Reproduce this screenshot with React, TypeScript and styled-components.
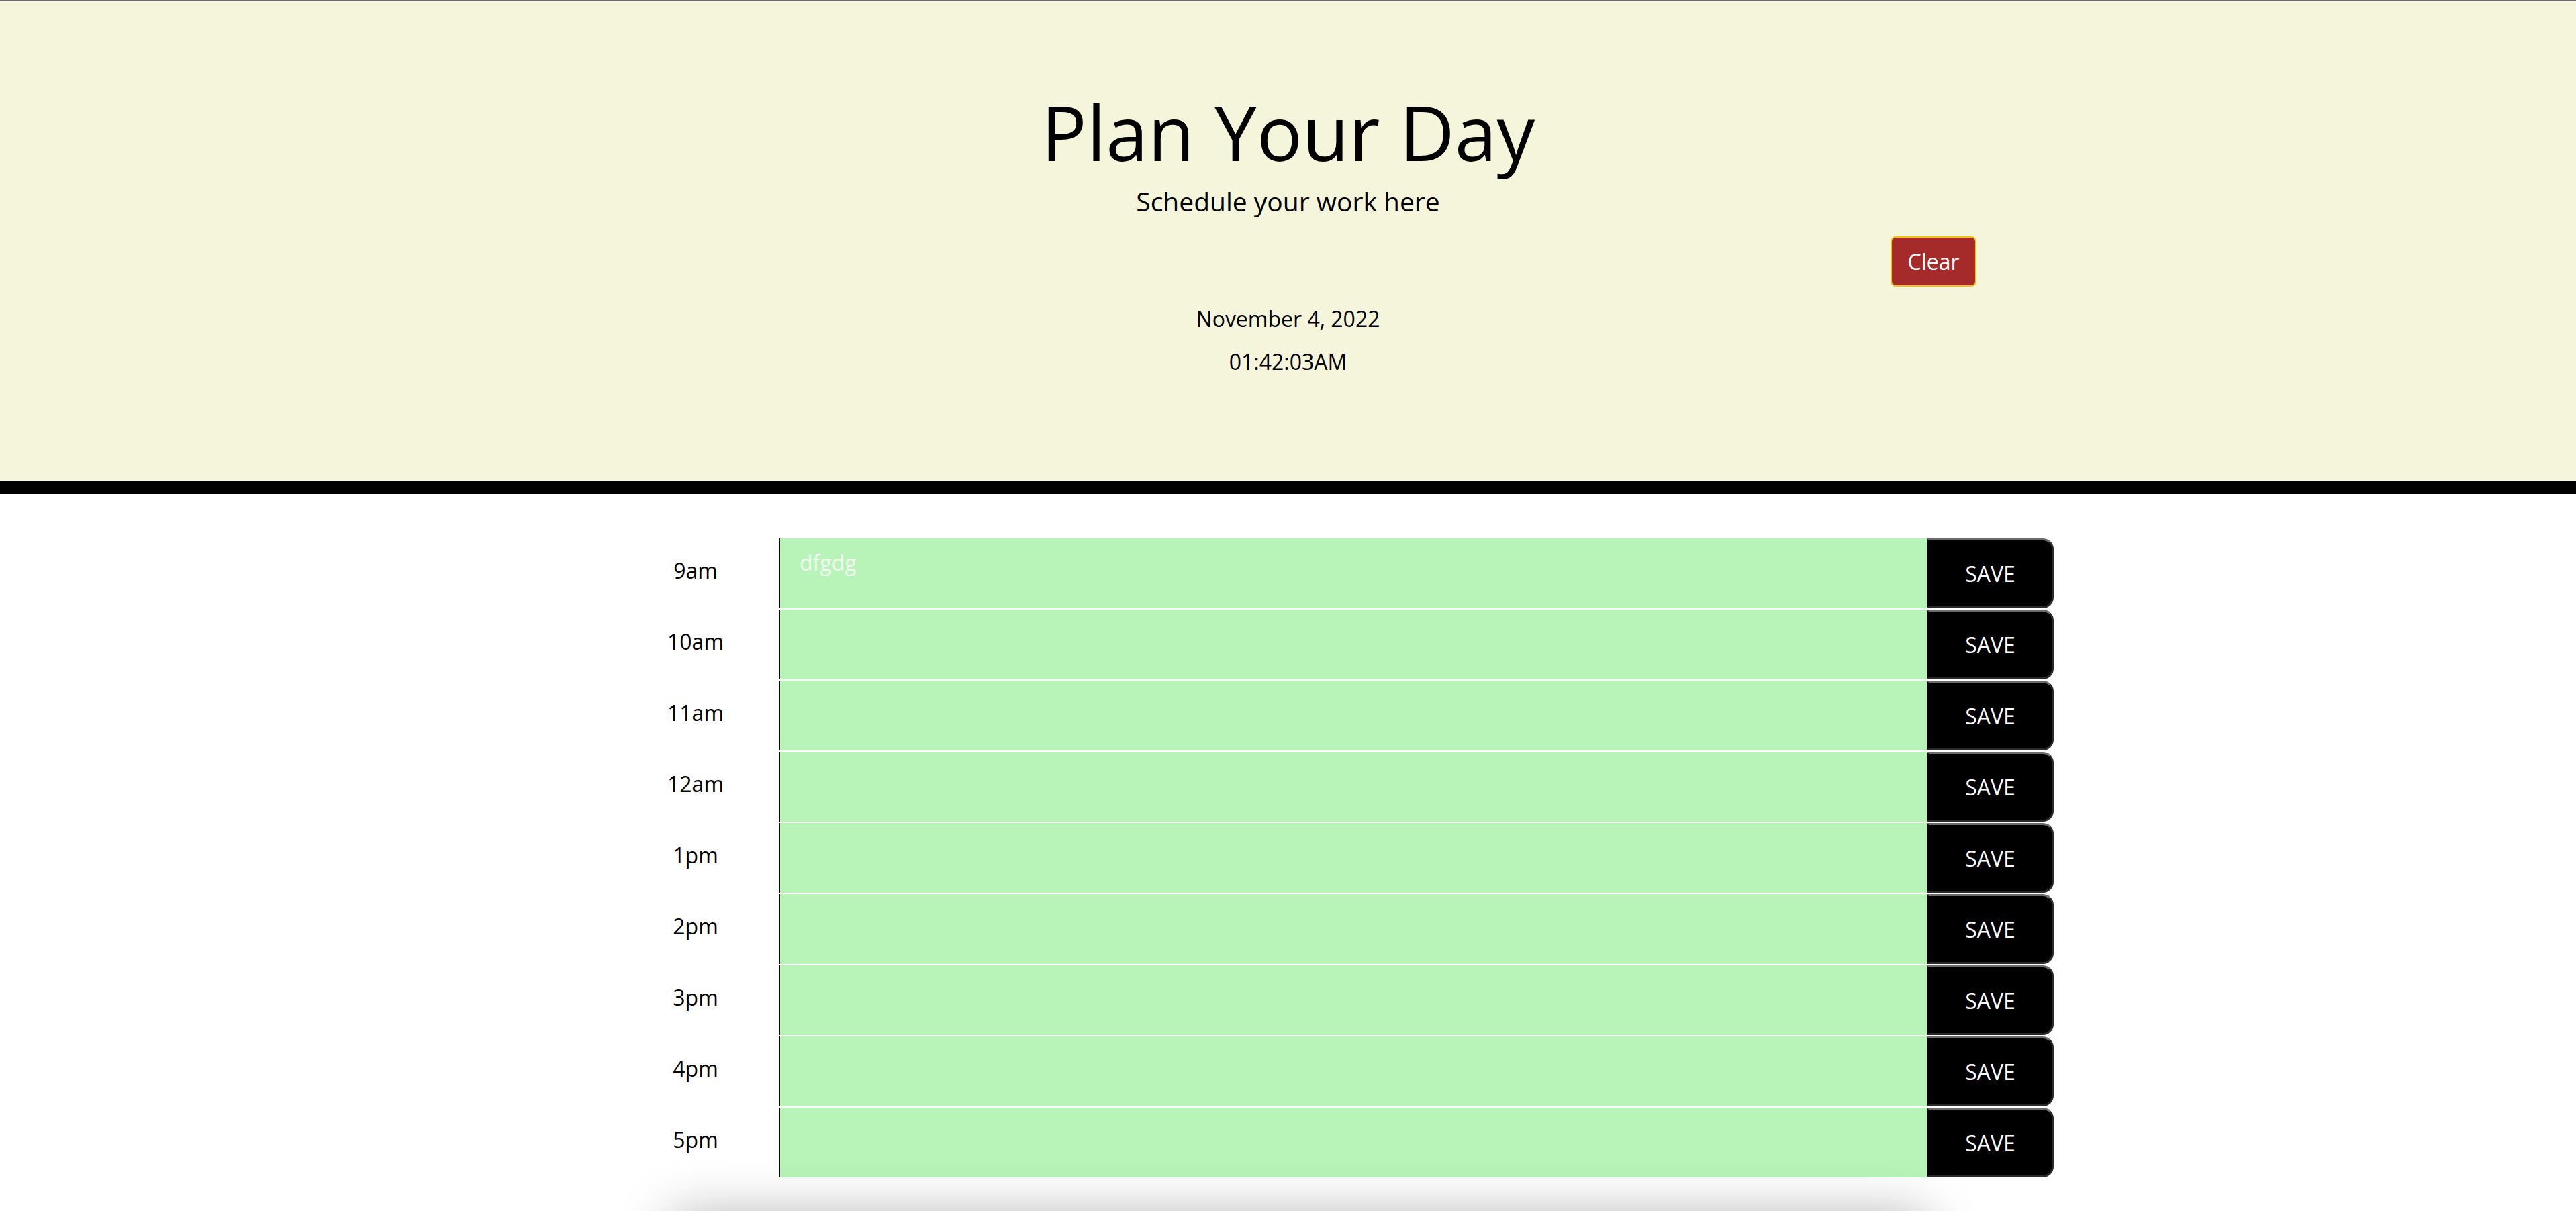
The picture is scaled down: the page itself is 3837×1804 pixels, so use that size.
import React from "react";
import styled, { createGlobalStyle } from "styled-components";

const GlobalStyle = createGlobalStyle`
  html, body {
    margin: 0;
    padding: 0;
    background: #ffffff;
    overflow: hidden;
    font-family: "Open Sans", "Noto Sans", sans-serif;
  }
  * { box-sizing: border-box; }
`;

const Page = styled.div`
  width: 3837px;
  height: 1804px;
  overflow: hidden;
  background: #ffffff;
`;

const Header = styled.header`
  display: flex;
  flex-direction: column;
  align-items: center;
  background: #f5f5dc;
  border-top: 2px solid #6a6a6a;
  border-bottom: 20px solid #000000;
  padding: 125px 0 153px;
  color: #000000;
`;

const Title = styled.h1`
  margin: 0;
  font-size: 113px;
  line-height: 139px;
  font-weight: 400;
`;

const Subtitle = styled.p`
  margin: 8px 0 0;
  font-size: 39px;
  line-height: 52px;
`;

const ClearRow = styled.div`
  align-self: stretch;
  display: flex;
  justify-content: flex-end;
  padding-right: 893px;
  margin-top: 26px;
`;

const ClearButton = styled.button`
  width: 128px;
  height: 75px;
  background: #a52a2a;
  color: #ffffff;
  border: 2px solid #f4c20d;
  border-radius: 8px;
  font-family: "Open Sans", sans-serif;
  font-size: 32px;
  line-height: 1;
  padding: 0;
`;

const DateLine = styled.p<{ $gap: number }>`
  margin: ${(p) => p.$gap}px 0 0;
  font-size: 32px;
  line-height: 48px;
`;

const Schedule = styled.main`
  display: flex;
  flex-direction: column;
  gap: 2px;
  width: 2133px;
  margin: 66px 0 0 926px;
`;

const Row = styled.div`
  display: grid;
  grid-template-columns: 234px 1fr 189px;
  height: 104px;
`;

const Hour = styled.div`
  padding: 24px 14px 0 0;
  text-align: center;
  font-size: 32px;
  line-height: 48px;
  color: #000000;
`;

const Entry = styled.textarea`
  display: block;
  height: 104px;
  margin: 0;
  border: none;
  border-left: 2px solid #000000;
  background: #b8f4b8;
  color: #f3fff3;
  font-family: "Open Sans", sans-serif;
  font-size: 32px;
  line-height: 48px;
  padding: 12px 29px;
  resize: none;
  outline: none;
`;

const SaveButton = styled.button`
  height: 104px;
  background: #000000;
  color: #ffffff;
  font-family: "Open Sans", sans-serif;
  font-size: 32px;
  padding: 0;
  border-style: solid;
  border-width: 3px;
  border-color: #6c6c6c #2a2a2a #2a2a2a #000000;
  border-radius: 0 16px 16px 0;
`;

const Shade = styled.div`
  width: 1830px;
  height: 200px;
  margin: 74px 0 0 94px;
  background: #d6d6d6;
  box-shadow: 0 0 80px 20px rgba(0, 0, 0, 0.3);
`;

const hours = ["9am", "10am", "11am", "12am", "1pm", "2pm", "3pm", "4pm", "5pm"];

export default function App() {
  return (
    <Page>
      <GlobalStyle />
      <Header>
        <Title>Plan Your Day</Title>
        <Subtitle>Schedule your work here</Subtitle>
        <ClearRow>
          <ClearButton>Clear</ClearButton>
        </ClearRow>
        <DateLine $gap={24}>November 4, 2022</DateLine>
        <DateLine $gap={16}>01:42:03AM</DateLine>
      </Header>
      <Schedule>
        {hours.map((h, i) => (
          <Row key={h}>
            <Hour>{h}</Hour>
            <Entry defaultValue={i === 0 ? "dfgdg" : ""} />
            <SaveButton>SAVE</SaveButton>
          </Row>
        ))}
        <Shade />
      </Schedule>
    </Page>
  );
}
